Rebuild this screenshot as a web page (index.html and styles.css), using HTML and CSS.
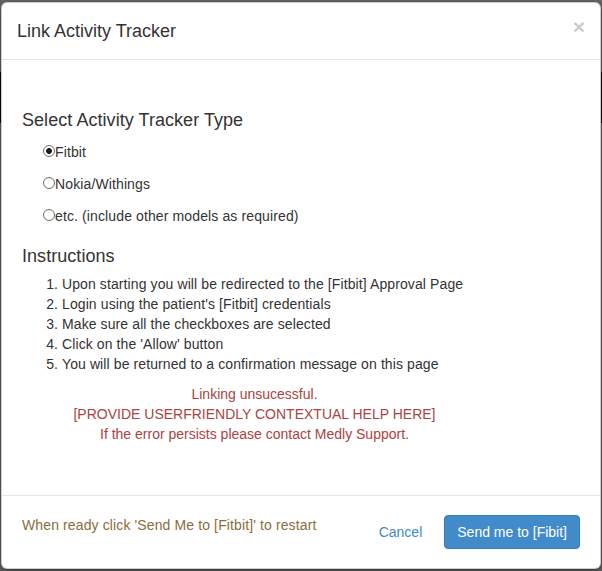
FILE: index.html
```html
<!DOCTYPE html>
<html lang="en">
<head>
<meta charset="utf-8">
<title>Link Activity Tracker</title>
<link rel="stylesheet" href="styles.css">
</head>
<body>
<div class="page">
  <div class="navband"></div>
</div>
<div class="modal" role="dialog" aria-labelledby="modalTitle">
  <div class="modal-header">
    <h4 class="modal-title" id="modalTitle">Link Activity Tracker</h4>
    <button type="button" class="close" aria-label="Close">&times;</button>
  </div>
  <div class="modal-body">
    <h4 class="section-title section-first">Select Activity Tracker Type</h4>
    <div class="radio-list">
      <label class="radio"><input type="radio" name="tracker" checked>Fitbit</label>
      <label class="radio"><input type="radio" name="tracker">Nokia/Withings</label>
      <label class="radio"><input type="radio" name="tracker">etc. (include other models as required)</label>
    </div>
    <h4 class="section-title section-instructions">Instructions</h4>
    <ol class="steps">
      <li>Upon starting you will be redirected to the [Fitbit] Approval Page</li>
      <li>Login using the patient's [Fitbit] credentials</li>
      <li>Make sure all the checkboxes are selected</li>
      <li>Click on the 'Allow' button</li>
      <li>You will be returned to a confirmation message on this page</li>
    </ol>
    <div class="error-msg">
      Linking unsucessful.<br>
      [PROVIDE USERFRIENDLY CONTEXTUAL HELP HERE]<br>
      If the error persists please contact Medly Support.
    </div>
  </div>
  <div class="modal-footer">
    <div class="footer-note">When ready click 'Send Me to [Fitbit]' to restart</div>
    <div class="actions">
      <button type="button" class="btn btn-link">Cancel</button>
      <button type="button" class="btn btn-primary">Send me to [Fibit]</button>
    </div>
  </div>
</div>
</body>
</html>
```

FILE: styles.css
```css
* {
  box-sizing: border-box;
}

html, body {
  margin: 0;
  padding: 0;
}

body {
  width: 602px;
  height: 571px;
  overflow: hidden;
  background: #666666;
  font-family: "Liberation Sans", Arial, Helvetica, sans-serif;
  font-size: 14px;
  line-height: 20px;
  color: #333333;
}

.page {
  height: 571px;
  padding-top: 72px;
}

.navband {
  height: 51px;
  background: #0e0e0e;
}

.modal {
  position: absolute;
  left: 1px;
  top: 2px;
  width: 600px;
  background: #ffffff;
  border: 1px solid rgba(0, 0, 0, 0.2);
  border-radius: 6px;
  box-shadow: 0 3px 9px rgba(0, 0, 0, 0.5);
}

.modal-header {
  display: flex;
  justify-content: space-between;
  align-items: flex-start;
  padding: 15px;
  border-bottom: 1px solid #e5e5e5;
}

.modal-title {
  margin: 0;
  font-size: 18px;
  line-height: 26px;
  font-weight: normal;
  color: #333333;
}

.close {
  margin: -2px 0 0 0;
  padding: 0;
  border: 0;
  background: none;
  font-family: "Liberation Sans", Arial, sans-serif;
  font-size: 21px;
  font-weight: bold;
  line-height: 21px;
  color: #000000;
  opacity: 0.2;
  cursor: pointer;
}

.modal-body {
  padding: 20px 20px 20px;
}

.section-title {
  margin: 0;
  font-size: 18px;
  line-height: 20px;
  font-weight: normal;
  color: #333333;
  letter-spacing: 0.05px;
}

.section-first {
  margin-top: 30px;
  margin-bottom: 12px;
}

.radio-list {
  display: flex;
  flex-direction: column;
  gap: 12px;
}

.radio {
  display: flex;
  align-items: flex-start;
  padding-left: 21px;
  line-height: 20px;
  font-weight: normal;
  letter-spacing: 0.12px;
  cursor: pointer;
}

.radio input {
  -webkit-appearance: none;
  appearance: none;
  flex: none;
  width: 12px;
  height: 12px;
  margin: 3px 0 0 0;
  border: 1px solid #6a6a6a;
  border-radius: 50%;
  background: #ffffff;
}

.radio input:checked {
  background: radial-gradient(circle, #1e1e1e 0, #1e1e1e 2.6px, #ffffff 3.2px);
}

.section-instructions {
  margin-top: 20px;
  margin-bottom: 8px;
}

.steps {
  margin: 0;
  padding-left: 40px;
  line-height: 20px;
  letter-spacing: 0.1px;
}

.error-msg {
  width: 83.3333%;
  margin: 10px 0 31px;
  text-align: center;
  color: #a94442;
  line-height: 20px;
}

.modal-footer {
  display: flex;
  justify-content: space-between;
  align-items: flex-start;
  padding: 19px 20px 19px;
  border-top: 1px solid #e5e5e5;
}

.footer-note {
  color: #8a6d3b;
  line-height: 20px;
  letter-spacing: 0.12px;
}

.actions {
  display: flex;
  gap: 9px;
}

.btn {
  display: inline-block;
  padding: 6px 12px;
  border: 1px solid transparent;
  border-radius: 4px;
  font-family: "Liberation Sans", Arial, sans-serif;
  font-size: 14px;
  line-height: 20px;
  font-weight: normal;
  cursor: pointer;
  white-space: nowrap;
}

.btn-link {
  background: transparent;
  color: #428bca;
}

.btn-primary {
  background: #428bca;
  border-color: #357ebd;
  color: #ffffff;
}
```
